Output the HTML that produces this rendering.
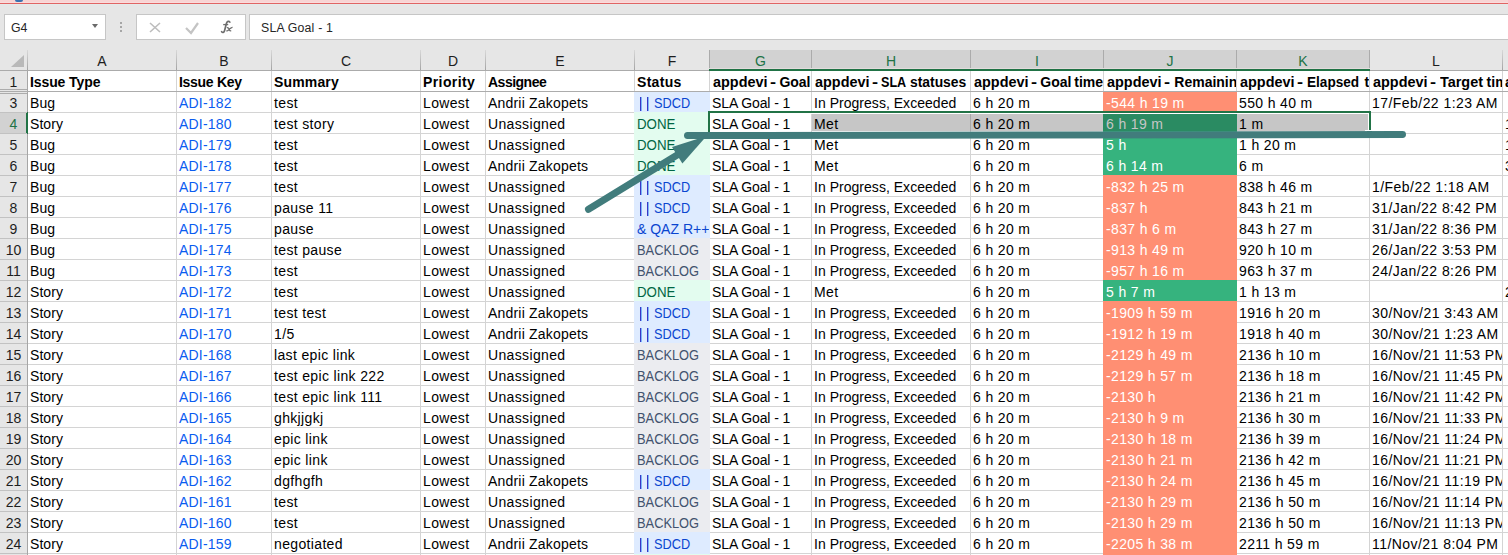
<!DOCTYPE html>
<html><head><meta charset="utf-8"><title>Excel</title>
<style>
html,body{margin:0;padding:0;}
body{width:1508px;height:555px;overflow:hidden;position:relative;background:#e6e6e6;font-family:"Liberation Sans",sans-serif;}
.b{position:absolute;box-sizing:content-box;}
.t,.tb,.hd,.fb{position:absolute;white-space:pre;font-size:14px;line-height:20px;height:20px;}
.tb{font-weight:bold;}
.fb{font-size:12.3px;}
.hd{font-size:14px;}
</style></head><body>
<div class="b" style="left:0px;top:0px;width:1508px;height:3px;background:#f8d4d4;"></div>
<div class="b" style="left:0px;top:2px;width:1508px;height:1px;background:#fadcdc;"></div>
<div class="b" style="left:0px;top:3px;width:1508px;height:1px;background:#e06464;"></div>
<div class="b" style="left:0px;top:4px;width:1508px;height:1px;background:#e4eaea;"></div>
<div class="b" style="left:15px;top:0px;width:8px;height:2px;background:#3a72b0;border-radius:0 0 4px 4px;"></div>
<div class="b" style="left:4px;top:14px;width:100px;height:24px;background:#fff;border:1px solid #c6c6c6;"></div>
<div class="fb" style="left:11px;top:18px;color:#262626;">G4</div>
<div class="b" style="left:92px;top:24px;width:0;height:0;border-left:3.5px solid transparent;border-right:3.5px solid transparent;border-top:4px solid #6a6a6a;"></div>
<div class="b" style="left:120px;top:22px;width:2px;height:2px;background:#a6a6a6;"></div>
<div class="b" style="left:120px;top:26px;width:2px;height:2px;background:#a6a6a6;"></div>
<div class="b" style="left:120px;top:30px;width:2px;height:2px;background:#a6a6a6;"></div>
<div class="b" style="left:136px;top:14px;width:108px;height:24px;background:#fff;border:1px solid #c6c6c6;"></div>
<svg class="b" style="left:136px;top:14px" width="110" height="26"><path d="M14 9 L24 18 M24 9 L14 18" stroke="#bdbdbd" stroke-width="1.6" fill="none"/><path d="M50 14 L55 19 L62 9" stroke="#c4c4c4" stroke-width="2.2" fill="none"/></svg>
<svg class="b" style="left:0;top:0" width="260" height="40"><path d="M229.8 22.2 C229 20.8 227 21 226.4 23.5 L224.6 30.5 C224 32.8 222.5 33 221.6 31.6" stroke="#6e6e6e" stroke-width="1.7" fill="none" stroke-linecap="round"/><path d="M223.2 24.6 L228.2 24.6" stroke="#6e6e6e" stroke-width="1.3" fill="none"/><path d="M226.8 27.6 C228.6 27.2 229.2 29 229.6 30.4 C230 31 231 30.8 231.2 30.6 M232.6 27.4 C231.6 27.2 229 29.5 228 30.4 C227.5 30.9 226.8 30.8 226.4 30.6" stroke="#6e6e6e" stroke-width="1.3" fill="none"/></svg>
<div class="b" style="left:249px;top:14px;width:1280px;height:24px;background:#fff;border:1px solid #c6c6c6;"></div>
<div class="fb" style="left:261px;top:18px;color:#262626;letter-spacing:0.2px;">SLA Goal - 1</div>
<div class="b" style="left:0px;top:50px;width:1508px;height:20px;background:#e6e6e6;"></div>
<div class="b" style="left:0px;top:70px;width:1508px;height:1px;background:#ababab;"></div>
<div class="b" style="left:710px;top:50px;width:660px;height:19px;background:#d2d2d2;"></div>
<div class="b" style="left:11px;top:55px;width:0;height:0;border-bottom:12px solid #b9b9b9;border-left:13px solid transparent;"></div>
<div class="b" style="left:27px;top:50px;width:1px;height:20px;background:linear-gradient(#d8d8d8,#a4a4a4);"></div>
<div class="b" style="left:176px;top:50px;width:1px;height:20px;background:linear-gradient(#d8d8d8,#a4a4a4);"></div>
<div class="b" style="left:271px;top:50px;width:1px;height:20px;background:linear-gradient(#d8d8d8,#a4a4a4);"></div>
<div class="b" style="left:420px;top:50px;width:1px;height:20px;background:linear-gradient(#d8d8d8,#a4a4a4);"></div>
<div class="b" style="left:485px;top:50px;width:1px;height:20px;background:linear-gradient(#d8d8d8,#a4a4a4);"></div>
<div class="b" style="left:634px;top:50px;width:1px;height:20px;background:linear-gradient(#d8d8d8,#a4a4a4);"></div>
<div class="b" style="left:709px;top:50px;width:1px;height:20px;background:#ababab;"></div>
<div class="b" style="left:811px;top:50px;width:1px;height:20px;background:#ababab;"></div>
<div class="b" style="left:970px;top:50px;width:1px;height:20px;background:#ababab;"></div>
<div class="b" style="left:1103px;top:50px;width:1px;height:20px;background:#ababab;"></div>
<div class="b" style="left:1236px;top:50px;width:1px;height:20px;background:#ababab;"></div>
<div class="b" style="left:1369px;top:50px;width:1px;height:20px;background:#ababab;"></div>
<div class="b" style="left:1502px;top:50px;width:1px;height:20px;background:linear-gradient(#d8d8d8,#a4a4a4);"></div>
<div class="b" style="left:709px;top:68px;width:661px;height:1px;background:#e2dcdc;"></div>
<div class="b" style="left:709px;top:69px;width:661px;height:2px;background:#217346;"></div>
<div class="hd" style="left:28px;top:51px;width:148px;text-align:center;color:#1e1e1e">A</div>
<div class="hd" style="left:177px;top:51px;width:94px;text-align:center;color:#1e1e1e">B</div>
<div class="hd" style="left:272px;top:51px;width:148px;text-align:center;color:#1e1e1e">C</div>
<div class="hd" style="left:421px;top:51px;width:64px;text-align:center;color:#1e1e1e">D</div>
<div class="hd" style="left:486px;top:51px;width:148px;text-align:center;color:#1e1e1e">E</div>
<div class="hd" style="left:635px;top:51px;width:74px;text-align:center;color:#1e1e1e">F</div>
<div class="hd" style="left:710px;top:51px;width:101px;text-align:center;color:#217346">G</div>
<div class="hd" style="left:812px;top:51px;width:158px;text-align:center;color:#217346">H</div>
<div class="hd" style="left:971px;top:51px;width:132px;text-align:center;color:#217346">I</div>
<div class="hd" style="left:1104px;top:51px;width:132px;text-align:center;color:#217346">J</div>
<div class="hd" style="left:1237px;top:51px;width:132px;text-align:center;color:#217346">K</div>
<div class="hd" style="left:1370px;top:51px;width:132px;text-align:center;color:#1e1e1e">L</div>
<div class="hd" style="left:1503px;top:51px;width:132px;text-align:center;color:#1e1e1e">M</div>
<div class="b" style="left:0px;top:71px;width:27px;height:484px;background:#e6e6e6;"></div>
<div class="b" style="left:27px;top:71px;width:1px;height:484px;background:#a6a6a6;"></div>
<div class="b" style="left:0px;top:113px;width:26px;height:20px;background:#d2d2d2;"></div>
<div class="b" style="left:26px;top:112px;width:2px;height:22px;background:#217346;"></div>
<div class="b" style="left:28px;top:71px;width:1480px;height:484px;background:#fff;"></div>
<div class="tb" style="left:30px;top:72px;color:#000;width:146px;overflow:hidden;letter-spacing:-0.1px;">Issue Type</div>
<div class="tb" style="left:179px;top:72px;color:#000;width:92px;overflow:hidden;letter-spacing:-0.3px;">Issue Key</div>
<div class="tb" style="left:274px;top:72px;color:#000;width:146px;overflow:hidden;letter-spacing:0.15px;">Summary</div>
<div class="tb" style="left:423px;top:72px;color:#000;width:62px;overflow:hidden;letter-spacing:0.4px;">Priority</div>
<div class="tb" style="left:488px;top:72px;color:#000;width:146px;overflow:hidden;letter-spacing:-0.5px;">Assignee</div>
<div class="tb" style="left:637px;top:72px;color:#000;width:72px;overflow:hidden;letter-spacing:0.3px;">Status</div>
<div class="tb" style="left:710px;top:72px;width:101px;overflow:hidden;"><span style="position:absolute;left:2.6px;top:0;transform:scaleX(1.03);transform-origin:0 0;">appdevi</span><span style="position:absolute;left:60.3px;top:0;transform:scaleX(1.3);transform-origin:0 0;">-</span><span style="position:absolute;left:69.4px;top:0;transform:scaleX(1.0);transform-origin:0 0;">Goal</span></div>
<div class="tb" style="left:812px;top:72px;width:158px;overflow:hidden;"><span style="position:absolute;left:2.7px;top:0;transform:scaleX(1.03);transform-origin:0 0;">appdevi</span><span style="position:absolute;left:60.2px;top:0;transform:scaleX(1.3);transform-origin:0 0;">-</span><span style="position:absolute;left:69.0px;top:0;transform:scaleX(0.9);transform-origin:0 0;">SLA</span><span style="position:absolute;left:98.3px;top:0;transform:scaleX(0.99);transform-origin:0 0;">statuses</span></div>
<div class="tb" style="left:971px;top:72px;width:132px;overflow:hidden;"><span style="position:absolute;left:2.5px;top:0;transform:scaleX(1.03);transform-origin:0 0;">appdevi</span><span style="position:absolute;left:60.0px;top:0;transform:scaleX(1.3);transform-origin:0 0;">-</span><span style="position:absolute;left:69.3px;top:0;transform:scaleX(1.0);transform-origin:0 0;">Goal</span><span style="position:absolute;left:103.3px;top:0;transform:scaleX(1.0);transform-origin:0 0;">time</span></div>
<div class="tb" style="left:1104px;top:72px;width:132px;overflow:hidden;"><span style="position:absolute;left:2.6px;top:0;transform:scaleX(1.03);transform-origin:0 0;">appdevi</span><span style="position:absolute;left:60.1px;top:0;transform:scaleX(1.3);transform-origin:0 0;">-</span><span style="position:absolute;left:70.3px;top:0;transform:scaleX(1.0);transform-origin:0 0;">Remaining</span></div>
<div class="tb" style="left:1237px;top:72px;width:132px;overflow:hidden;"><span style="position:absolute;left:2.6px;top:0;transform:scaleX(1.03);transform-origin:0 0;">appdevi</span><span style="position:absolute;left:60.1px;top:0;transform:scaleX(1.3);transform-origin:0 0;">-</span><span style="position:absolute;left:70.3px;top:0;transform:scaleX(0.97);transform-origin:0 0;">Elapsed</span><span style="position:absolute;left:127.4px;top:0;transform:scaleX(1.0);transform-origin:0 0;">time</span></div>
<div class="tb" style="left:1370px;top:72px;width:132px;overflow:hidden;"><span style="position:absolute;left:2.8px;top:0;transform:scaleX(1.03);transform-origin:0 0;">appdevi</span><span style="position:absolute;left:60.3px;top:0;transform:scaleX(1.3);transform-origin:0 0;">-</span><span style="position:absolute;left:70.0px;top:0;transform:scaleX(1.03);transform-origin:0 0;">Target</span><span style="position:absolute;left:116.6px;top:0;transform:scaleX(1.0);transform-origin:0 0;">time</span></div>
<div class="tb" style="left:1503px;top:72px;width:132px;overflow:hidden;"><span style="position:absolute;left:2.0px;top:0;transform:scaleX(1.03);transform-origin:0 0;">appdevi</span></div>
<div class="b" style="left:0px;top:91px;width:1508px;height:1px;background:#acacac;"></div>
<div class="b" style="left:0px;top:89px;width:27px;height:1px;background:#acacac;"></div>
<div class="b" style="left:0px;top:93px;width:27px;height:1px;background:#acacac;"></div>
<div class="b" style="left:28px;top:112px;width:1480px;height:1px;background:#d4d4d4;"></div>
<div class="b" style="left:28px;top:133px;width:1480px;height:1px;background:#d4d4d4;"></div>
<div class="b" style="left:28px;top:154px;width:1480px;height:1px;background:#d4d4d4;"></div>
<div class="b" style="left:28px;top:175px;width:1480px;height:1px;background:#d4d4d4;"></div>
<div class="b" style="left:28px;top:196px;width:1480px;height:1px;background:#d4d4d4;"></div>
<div class="b" style="left:28px;top:217px;width:1480px;height:1px;background:#d4d4d4;"></div>
<div class="b" style="left:28px;top:238px;width:1480px;height:1px;background:#d4d4d4;"></div>
<div class="b" style="left:28px;top:259px;width:1480px;height:1px;background:#d4d4d4;"></div>
<div class="b" style="left:28px;top:280px;width:1480px;height:1px;background:#d4d4d4;"></div>
<div class="b" style="left:28px;top:301px;width:1480px;height:1px;background:#d4d4d4;"></div>
<div class="b" style="left:28px;top:322px;width:1480px;height:1px;background:#d4d4d4;"></div>
<div class="b" style="left:28px;top:343px;width:1480px;height:1px;background:#d4d4d4;"></div>
<div class="b" style="left:28px;top:364px;width:1480px;height:1px;background:#d4d4d4;"></div>
<div class="b" style="left:28px;top:385px;width:1480px;height:1px;background:#d4d4d4;"></div>
<div class="b" style="left:28px;top:406px;width:1480px;height:1px;background:#d4d4d4;"></div>
<div class="b" style="left:28px;top:427px;width:1480px;height:1px;background:#d4d4d4;"></div>
<div class="b" style="left:28px;top:448px;width:1480px;height:1px;background:#d4d4d4;"></div>
<div class="b" style="left:28px;top:469px;width:1480px;height:1px;background:#d4d4d4;"></div>
<div class="b" style="left:28px;top:490px;width:1480px;height:1px;background:#d4d4d4;"></div>
<div class="b" style="left:28px;top:511px;width:1480px;height:1px;background:#d4d4d4;"></div>
<div class="b" style="left:28px;top:532px;width:1480px;height:1px;background:#d4d4d4;"></div>
<div class="b" style="left:28px;top:553px;width:1480px;height:1px;background:#d4d4d4;"></div>
<div class="b" style="left:176px;top:71px;width:1px;height:484px;background:#d4d4d4;"></div>
<div class="b" style="left:271px;top:71px;width:1px;height:484px;background:#d4d4d4;"></div>
<div class="b" style="left:420px;top:71px;width:1px;height:484px;background:#d4d4d4;"></div>
<div class="b" style="left:485px;top:71px;width:1px;height:484px;background:#d4d4d4;"></div>
<div class="b" style="left:634px;top:71px;width:1px;height:484px;background:#d4d4d4;"></div>
<div class="b" style="left:709px;top:71px;width:1px;height:484px;background:#d4d4d4;"></div>
<div class="b" style="left:811px;top:71px;width:1px;height:484px;background:#d4d4d4;"></div>
<div class="b" style="left:970px;top:71px;width:1px;height:484px;background:#d4d4d4;"></div>
<div class="b" style="left:1103px;top:71px;width:1px;height:484px;background:#d4d4d4;"></div>
<div class="b" style="left:1236px;top:71px;width:1px;height:484px;background:#d4d4d4;"></div>
<div class="b" style="left:1369px;top:71px;width:1px;height:484px;background:#d4d4d4;"></div>
<div class="b" style="left:1502px;top:71px;width:1px;height:484px;background:#d4d4d4;"></div>
<div class="b" style="left:0px;top:112px;width:27px;height:1px;background:#c2c2c2;"></div>
<div class="b" style="left:0px;top:133px;width:27px;height:1px;background:#c2c2c2;"></div>
<div class="b" style="left:0px;top:154px;width:27px;height:1px;background:#c2c2c2;"></div>
<div class="b" style="left:0px;top:175px;width:27px;height:1px;background:#c2c2c2;"></div>
<div class="b" style="left:0px;top:196px;width:27px;height:1px;background:#c2c2c2;"></div>
<div class="b" style="left:0px;top:217px;width:27px;height:1px;background:#c2c2c2;"></div>
<div class="b" style="left:0px;top:238px;width:27px;height:1px;background:#c2c2c2;"></div>
<div class="b" style="left:0px;top:259px;width:27px;height:1px;background:#c2c2c2;"></div>
<div class="b" style="left:0px;top:280px;width:27px;height:1px;background:#c2c2c2;"></div>
<div class="b" style="left:0px;top:301px;width:27px;height:1px;background:#c2c2c2;"></div>
<div class="b" style="left:0px;top:322px;width:27px;height:1px;background:#c2c2c2;"></div>
<div class="b" style="left:0px;top:343px;width:27px;height:1px;background:#c2c2c2;"></div>
<div class="b" style="left:0px;top:364px;width:27px;height:1px;background:#c2c2c2;"></div>
<div class="b" style="left:0px;top:385px;width:27px;height:1px;background:#c2c2c2;"></div>
<div class="b" style="left:0px;top:406px;width:27px;height:1px;background:#c2c2c2;"></div>
<div class="b" style="left:0px;top:427px;width:27px;height:1px;background:#c2c2c2;"></div>
<div class="b" style="left:0px;top:448px;width:27px;height:1px;background:#c2c2c2;"></div>
<div class="b" style="left:0px;top:469px;width:27px;height:1px;background:#c2c2c2;"></div>
<div class="b" style="left:0px;top:490px;width:27px;height:1px;background:#c2c2c2;"></div>
<div class="b" style="left:0px;top:511px;width:27px;height:1px;background:#c2c2c2;"></div>
<div class="b" style="left:0px;top:532px;width:27px;height:1px;background:#c2c2c2;"></div>
<div class="b" style="left:0px;top:553px;width:27px;height:1px;background:#c2c2c2;"></div>
<div class="b" style="left:634px;top:91px;width:76px;height:22px;background:#deebff;"></div>
<div class="b" style="left:1103px;top:91px;width:134px;height:22px;background:#ff8f73;"></div>
<div class="b" style="left:634px;top:112px;width:76px;height:22px;background:#e3fcef;"></div>
<div class="b" style="left:1103px;top:112px;width:134px;height:22px;background:#36b37e;"></div>
<div class="b" style="left:634px;top:133px;width:76px;height:22px;background:#e3fcef;"></div>
<div class="b" style="left:1103px;top:133px;width:134px;height:22px;background:#36b37e;"></div>
<div class="b" style="left:634px;top:154px;width:76px;height:22px;background:#e3fcef;"></div>
<div class="b" style="left:1103px;top:154px;width:134px;height:22px;background:#36b37e;"></div>
<div class="b" style="left:634px;top:175px;width:76px;height:22px;background:#deebff;"></div>
<div class="b" style="left:1103px;top:175px;width:134px;height:22px;background:#ff8f73;"></div>
<div class="b" style="left:634px;top:196px;width:76px;height:22px;background:#deebff;"></div>
<div class="b" style="left:1103px;top:196px;width:134px;height:22px;background:#ff8f73;"></div>
<div class="b" style="left:634px;top:217px;width:76px;height:22px;background:#deebff;"></div>
<div class="b" style="left:1103px;top:217px;width:134px;height:22px;background:#ff8f73;"></div>
<div class="b" style="left:634px;top:238px;width:76px;height:22px;background:#ebecf0;"></div>
<div class="b" style="left:1103px;top:238px;width:134px;height:22px;background:#ff8f73;"></div>
<div class="b" style="left:634px;top:259px;width:76px;height:22px;background:#ebecf0;"></div>
<div class="b" style="left:1103px;top:259px;width:134px;height:22px;background:#ff8f73;"></div>
<div class="b" style="left:634px;top:280px;width:76px;height:22px;background:#e3fcef;"></div>
<div class="b" style="left:1103px;top:280px;width:134px;height:22px;background:#36b37e;"></div>
<div class="b" style="left:634px;top:301px;width:76px;height:22px;background:#deebff;"></div>
<div class="b" style="left:1103px;top:301px;width:134px;height:22px;background:#ff8f73;"></div>
<div class="b" style="left:634px;top:322px;width:76px;height:22px;background:#deebff;"></div>
<div class="b" style="left:1103px;top:322px;width:134px;height:22px;background:#ff8f73;"></div>
<div class="b" style="left:634px;top:343px;width:76px;height:22px;background:#ebecf0;"></div>
<div class="b" style="left:1103px;top:343px;width:134px;height:22px;background:#ff8f73;"></div>
<div class="b" style="left:634px;top:364px;width:76px;height:22px;background:#ebecf0;"></div>
<div class="b" style="left:1103px;top:364px;width:134px;height:22px;background:#ff8f73;"></div>
<div class="b" style="left:634px;top:385px;width:76px;height:22px;background:#ebecf0;"></div>
<div class="b" style="left:1103px;top:385px;width:134px;height:22px;background:#ff8f73;"></div>
<div class="b" style="left:634px;top:406px;width:76px;height:22px;background:#ebecf0;"></div>
<div class="b" style="left:1103px;top:406px;width:134px;height:22px;background:#ff8f73;"></div>
<div class="b" style="left:634px;top:427px;width:76px;height:22px;background:#ebecf0;"></div>
<div class="b" style="left:1103px;top:427px;width:134px;height:22px;background:#ff8f73;"></div>
<div class="b" style="left:634px;top:448px;width:76px;height:22px;background:#ebecf0;"></div>
<div class="b" style="left:1103px;top:448px;width:134px;height:22px;background:#ff8f73;"></div>
<div class="b" style="left:634px;top:469px;width:76px;height:22px;background:#deebff;"></div>
<div class="b" style="left:1103px;top:469px;width:134px;height:22px;background:#ff8f73;"></div>
<div class="b" style="left:634px;top:490px;width:76px;height:22px;background:#ebecf0;"></div>
<div class="b" style="left:1103px;top:490px;width:134px;height:22px;background:#ff8f73;"></div>
<div class="b" style="left:634px;top:511px;width:76px;height:22px;background:#ebecf0;"></div>
<div class="b" style="left:1103px;top:511px;width:134px;height:22px;background:#ff8f73;"></div>
<div class="b" style="left:634px;top:532px;width:76px;height:24px;background:#deebff;"></div>
<div class="b" style="left:1103px;top:532px;width:134px;height:24px;background:#ff8f73;"></div>
<div class="b" style="left:634px;top:554px;width:76px;height:1px;background:#e3fcef;"></div>
<div class="b" style="left:0px;top:91px;width:1508px;height:1px;background:#acacac;"></div>
<div class="b" style="left:812px;top:113px;width:291px;height:18px;background:#c6c6c6;"></div>
<div class="b" style="left:970px;top:113px;width:1px;height:18px;background:#a8a8a8;"></div>
<div class="b" style="left:1103px;top:113px;width:134px;height:18px;background:#2a8b62;"></div>
<div class="b" style="left:1237px;top:113px;width:131px;height:18px;background:#c6c6c6;"></div>
<div class="t" style="left:0px;top:93px;width:27px;text-align:center;color:#1e1e1e">3</div>
<div class="t" style="left:30px;top:93px;color:#000;letter-spacing:0.1px;">Bug</div>
<div class="t" style="left:179px;top:93px;color:#0a5cf0;letter-spacing:0.2px;">ADI-182</div>
<div class="t" style="left:274px;top:93px;color:#000;letter-spacing:0.35px;">test</div>
<div class="t" style="left:423px;top:93px;color:#000;letter-spacing:0.35px;">Lowest</div>
<div class="t" style="left:488px;top:93px;color:#000;letter-spacing:0.2px;">Andrii Zakopets</div>
<div class="b" style="left:640px;top:97px;width:1px;height:14px;background:#3b36c4;box-shadow:1px 0 0 rgba(40,140,240,0.55)"></div>
<div class="b" style="left:647px;top:97px;width:1px;height:14px;background:#3b36c4;box-shadow:1px 0 0 rgba(40,140,240,0.55)"></div>
<div class="t" style="left:654px;top:93px;color:#0a45d0;transform:scaleX(0.91);transform-origin:0 0;">SDCD</div>
<div class="t" style="left:712px;top:93px;color:#000;letter-spacing:-0.1px;">SLA Goal - 1</div>
<div class="t" style="left:814px;top:93px;color:#000;letter-spacing:0.03px;">In Progress, Exceeded</div>
<div class="t" style="left:973px;top:93px;color:#000;letter-spacing:0.35px;">6 h 20 m</div>
<div class="t" style="left:1106px;top:93px;color:#fff;letter-spacing:0.35px;">-544 h 19 m</div>
<div class="t" style="left:1239px;top:93px;color:#000;letter-spacing:0.35px;">550 h 40 m</div>
<div class="t" style="left:1372px;top:93px;color:#000;width:130px;overflow:hidden;letter-spacing:0.45px;">17/Feb/22 1:23 AM</div>
<div class="t" style="left:0px;top:114px;width:27px;text-align:center;color:#217346">4</div>
<div class="t" style="left:30px;top:114px;color:#000;letter-spacing:0.05px;">Story</div>
<div class="t" style="left:179px;top:114px;color:#0a5cf0;letter-spacing:0.2px;">ADI-180</div>
<div class="t" style="left:274px;top:114px;color:#000;letter-spacing:0.35px;">test story</div>
<div class="t" style="left:423px;top:114px;color:#000;letter-spacing:0.35px;">Lowest</div>
<div class="t" style="left:488px;top:114px;color:#000;letter-spacing:0.35px;">Unassigned</div>
<div class="t" style="left:637px;top:114px;color:#006644;transform:scaleX(0.95);transform-origin:0 0;">DONE</div>
<div class="t" style="left:712px;top:114px;color:#000;letter-spacing:-0.1px;">SLA Goal - 1</div>
<div class="t" style="left:814px;top:114px;color:#000;letter-spacing:0.35px;">Met</div>
<div class="t" style="left:973px;top:114px;color:#000;letter-spacing:0.35px;">6 h 20 m</div>
<div class="t" style="left:1106px;top:114px;color:#c6c6c6;letter-spacing:0.35px;">6 h 19 m</div>
<div class="t" style="left:1239px;top:114px;color:#000;letter-spacing:0.35px;">1 m</div>
<div class="t" style="left:1505px;top:114px;color:#000;letter-spacing:0.35px;">1</div>
<div class="t" style="left:0px;top:135px;width:27px;text-align:center;color:#1e1e1e">5</div>
<div class="t" style="left:30px;top:135px;color:#000;letter-spacing:0.1px;">Bug</div>
<div class="t" style="left:179px;top:135px;color:#0a5cf0;letter-spacing:0.2px;">ADI-179</div>
<div class="t" style="left:274px;top:135px;color:#000;letter-spacing:0.35px;">test</div>
<div class="t" style="left:423px;top:135px;color:#000;letter-spacing:0.35px;">Lowest</div>
<div class="t" style="left:488px;top:135px;color:#000;letter-spacing:0.35px;">Unassigned</div>
<div class="t" style="left:637px;top:135px;color:#006644;transform:scaleX(0.95);transform-origin:0 0;">DONE</div>
<div class="t" style="left:712px;top:135px;color:#000;letter-spacing:-0.1px;">SLA Goal - 1</div>
<div class="t" style="left:814px;top:135px;color:#000;letter-spacing:0.35px;">Met</div>
<div class="t" style="left:973px;top:135px;color:#000;letter-spacing:0.35px;">6 h 20 m</div>
<div class="t" style="left:1106px;top:135px;color:#fff;letter-spacing:0.35px;">5 h</div>
<div class="t" style="left:1239px;top:135px;color:#000;letter-spacing:0.35px;">1 h 20 m</div>
<div class="t" style="left:1505px;top:135px;color:#000;letter-spacing:0.35px;">1</div>
<div class="t" style="left:0px;top:156px;width:27px;text-align:center;color:#1e1e1e">6</div>
<div class="t" style="left:30px;top:156px;color:#000;letter-spacing:0.1px;">Bug</div>
<div class="t" style="left:179px;top:156px;color:#0a5cf0;letter-spacing:0.2px;">ADI-178</div>
<div class="t" style="left:274px;top:156px;color:#000;letter-spacing:0.35px;">test</div>
<div class="t" style="left:423px;top:156px;color:#000;letter-spacing:0.35px;">Lowest</div>
<div class="t" style="left:488px;top:156px;color:#000;letter-spacing:0.2px;">Andrii Zakopets</div>
<div class="t" style="left:637px;top:156px;color:#006644;transform:scaleX(0.95);transform-origin:0 0;">DONE</div>
<div class="t" style="left:712px;top:156px;color:#000;letter-spacing:-0.1px;">SLA Goal - 1</div>
<div class="t" style="left:814px;top:156px;color:#000;letter-spacing:0.35px;">Met</div>
<div class="t" style="left:973px;top:156px;color:#000;letter-spacing:0.35px;">6 h 20 m</div>
<div class="t" style="left:1106px;top:156px;color:#fff;letter-spacing:0.35px;">6 h 14 m</div>
<div class="t" style="left:1239px;top:156px;color:#000;letter-spacing:0.35px;">6 m</div>
<div class="t" style="left:1505px;top:156px;color:#000;letter-spacing:0.35px;">3</div>
<div class="t" style="left:0px;top:177px;width:27px;text-align:center;color:#1e1e1e">7</div>
<div class="t" style="left:30px;top:177px;color:#000;letter-spacing:0.1px;">Bug</div>
<div class="t" style="left:179px;top:177px;color:#0a5cf0;letter-spacing:0.2px;">ADI-177</div>
<div class="t" style="left:274px;top:177px;color:#000;letter-spacing:0.35px;">test</div>
<div class="t" style="left:423px;top:177px;color:#000;letter-spacing:0.35px;">Lowest</div>
<div class="t" style="left:488px;top:177px;color:#000;letter-spacing:0.35px;">Unassigned</div>
<div class="b" style="left:640px;top:181px;width:1px;height:14px;background:#3b36c4;box-shadow:1px 0 0 rgba(40,140,240,0.55)"></div>
<div class="b" style="left:647px;top:181px;width:1px;height:14px;background:#3b36c4;box-shadow:1px 0 0 rgba(40,140,240,0.55)"></div>
<div class="t" style="left:654px;top:177px;color:#0a45d0;transform:scaleX(0.91);transform-origin:0 0;">SDCD</div>
<div class="t" style="left:712px;top:177px;color:#000;letter-spacing:-0.1px;">SLA Goal - 1</div>
<div class="t" style="left:814px;top:177px;color:#000;letter-spacing:0.03px;">In Progress, Exceeded</div>
<div class="t" style="left:973px;top:177px;color:#000;letter-spacing:0.35px;">6 h 20 m</div>
<div class="t" style="left:1106px;top:177px;color:#fff;letter-spacing:0.35px;">-832 h 25 m</div>
<div class="t" style="left:1239px;top:177px;color:#000;letter-spacing:0.35px;">838 h 46 m</div>
<div class="t" style="left:1372px;top:177px;color:#000;width:130px;overflow:hidden;letter-spacing:0.45px;">1/Feb/22 1:18 AM</div>
<div class="t" style="left:0px;top:198px;width:27px;text-align:center;color:#1e1e1e">8</div>
<div class="t" style="left:30px;top:198px;color:#000;letter-spacing:0.1px;">Bug</div>
<div class="t" style="left:179px;top:198px;color:#0a5cf0;letter-spacing:0.2px;">ADI-176</div>
<div class="t" style="left:274px;top:198px;color:#000;letter-spacing:0.35px;">pause 11</div>
<div class="t" style="left:423px;top:198px;color:#000;letter-spacing:0.35px;">Lowest</div>
<div class="t" style="left:488px;top:198px;color:#000;letter-spacing:0.35px;">Unassigned</div>
<div class="b" style="left:640px;top:202px;width:1px;height:14px;background:#3b36c4;box-shadow:1px 0 0 rgba(40,140,240,0.55)"></div>
<div class="b" style="left:647px;top:202px;width:1px;height:14px;background:#3b36c4;box-shadow:1px 0 0 rgba(40,140,240,0.55)"></div>
<div class="t" style="left:654px;top:198px;color:#0a45d0;transform:scaleX(0.91);transform-origin:0 0;">SDCD</div>
<div class="t" style="left:712px;top:198px;color:#000;letter-spacing:-0.1px;">SLA Goal - 1</div>
<div class="t" style="left:814px;top:198px;color:#000;letter-spacing:0.03px;">In Progress, Exceeded</div>
<div class="t" style="left:973px;top:198px;color:#000;letter-spacing:0.35px;">6 h 20 m</div>
<div class="t" style="left:1106px;top:198px;color:#fff;letter-spacing:0.35px;">-837 h</div>
<div class="t" style="left:1239px;top:198px;color:#000;letter-spacing:0.35px;">843 h 21 m</div>
<div class="t" style="left:1372px;top:198px;color:#000;width:130px;overflow:hidden;letter-spacing:0.45px;">31/Jan/22 8:42 PM</div>
<div class="t" style="left:0px;top:219px;width:27px;text-align:center;color:#1e1e1e">9</div>
<div class="t" style="left:30px;top:219px;color:#000;letter-spacing:0.1px;">Bug</div>
<div class="t" style="left:179px;top:219px;color:#0a5cf0;letter-spacing:0.2px;">ADI-175</div>
<div class="t" style="left:274px;top:219px;color:#000;letter-spacing:0.35px;">pause</div>
<div class="t" style="left:423px;top:219px;color:#000;letter-spacing:0.35px;">Lowest</div>
<div class="t" style="left:488px;top:219px;color:#000;letter-spacing:0.35px;">Unassigned</div>
<div class="t" style="left:637px;top:219px;color:#0a45d0;width:72px;overflow:hidden;">&amp; QAZ R++</div>
<div class="t" style="left:712px;top:219px;color:#000;letter-spacing:-0.1px;">SLA Goal - 1</div>
<div class="t" style="left:814px;top:219px;color:#000;letter-spacing:0.03px;">In Progress, Exceeded</div>
<div class="t" style="left:973px;top:219px;color:#000;letter-spacing:0.35px;">6 h 20 m</div>
<div class="t" style="left:1106px;top:219px;color:#fff;letter-spacing:0.35px;">-837 h 6 m</div>
<div class="t" style="left:1239px;top:219px;color:#000;letter-spacing:0.35px;">843 h 27 m</div>
<div class="t" style="left:1372px;top:219px;color:#000;width:130px;overflow:hidden;letter-spacing:0.45px;">31/Jan/22 8:36 PM</div>
<div class="t" style="left:0px;top:240px;width:27px;text-align:center;color:#1e1e1e">10</div>
<div class="t" style="left:30px;top:240px;color:#000;letter-spacing:0.1px;">Bug</div>
<div class="t" style="left:179px;top:240px;color:#0a5cf0;letter-spacing:0.2px;">ADI-174</div>
<div class="t" style="left:274px;top:240px;color:#000;letter-spacing:0.35px;">test pause</div>
<div class="t" style="left:423px;top:240px;color:#000;letter-spacing:0.35px;">Lowest</div>
<div class="t" style="left:488px;top:240px;color:#000;letter-spacing:0.35px;">Unassigned</div>
<div class="t" style="left:637px;top:240px;color:#42526e;transform:scaleX(0.917);transform-origin:0 0;">BACKLOG</div>
<div class="t" style="left:712px;top:240px;color:#000;letter-spacing:-0.1px;">SLA Goal - 1</div>
<div class="t" style="left:814px;top:240px;color:#000;letter-spacing:0.03px;">In Progress, Exceeded</div>
<div class="t" style="left:973px;top:240px;color:#000;letter-spacing:0.35px;">6 h 20 m</div>
<div class="t" style="left:1106px;top:240px;color:#fff;letter-spacing:0.35px;">-913 h 49 m</div>
<div class="t" style="left:1239px;top:240px;color:#000;letter-spacing:0.35px;">920 h 10 m</div>
<div class="t" style="left:1372px;top:240px;color:#000;width:130px;overflow:hidden;letter-spacing:0.45px;">26/Jan/22 3:53 PM</div>
<div class="t" style="left:0px;top:261px;width:27px;text-align:center;color:#1e1e1e">11</div>
<div class="t" style="left:30px;top:261px;color:#000;letter-spacing:0.1px;">Bug</div>
<div class="t" style="left:179px;top:261px;color:#0a5cf0;letter-spacing:0.2px;">ADI-173</div>
<div class="t" style="left:274px;top:261px;color:#000;letter-spacing:0.35px;">test</div>
<div class="t" style="left:423px;top:261px;color:#000;letter-spacing:0.35px;">Lowest</div>
<div class="t" style="left:488px;top:261px;color:#000;letter-spacing:0.35px;">Unassigned</div>
<div class="t" style="left:637px;top:261px;color:#42526e;transform:scaleX(0.917);transform-origin:0 0;">BACKLOG</div>
<div class="t" style="left:712px;top:261px;color:#000;letter-spacing:-0.1px;">SLA Goal - 1</div>
<div class="t" style="left:814px;top:261px;color:#000;letter-spacing:0.03px;">In Progress, Exceeded</div>
<div class="t" style="left:973px;top:261px;color:#000;letter-spacing:0.35px;">6 h 20 m</div>
<div class="t" style="left:1106px;top:261px;color:#fff;letter-spacing:0.35px;">-957 h 16 m</div>
<div class="t" style="left:1239px;top:261px;color:#000;letter-spacing:0.35px;">963 h 37 m</div>
<div class="t" style="left:1372px;top:261px;color:#000;width:130px;overflow:hidden;letter-spacing:0.45px;">24/Jan/22 8:26 PM</div>
<div class="t" style="left:0px;top:282px;width:27px;text-align:center;color:#1e1e1e">12</div>
<div class="t" style="left:30px;top:282px;color:#000;letter-spacing:0.05px;">Story</div>
<div class="t" style="left:179px;top:282px;color:#0a5cf0;letter-spacing:0.2px;">ADI-172</div>
<div class="t" style="left:274px;top:282px;color:#000;letter-spacing:0.35px;">test</div>
<div class="t" style="left:423px;top:282px;color:#000;letter-spacing:0.35px;">Lowest</div>
<div class="t" style="left:488px;top:282px;color:#000;letter-spacing:0.35px;">Unassigned</div>
<div class="t" style="left:637px;top:282px;color:#006644;transform:scaleX(0.95);transform-origin:0 0;">DONE</div>
<div class="t" style="left:712px;top:282px;color:#000;letter-spacing:-0.1px;">SLA Goal - 1</div>
<div class="t" style="left:814px;top:282px;color:#000;letter-spacing:0.35px;">Met</div>
<div class="t" style="left:973px;top:282px;color:#000;letter-spacing:0.35px;">6 h 20 m</div>
<div class="t" style="left:1106px;top:282px;color:#fff;letter-spacing:0.35px;">5 h 7 m</div>
<div class="t" style="left:1239px;top:282px;color:#000;letter-spacing:0.35px;">1 h 13 m</div>
<div class="t" style="left:1505px;top:282px;color:#000;letter-spacing:0.35px;">2</div>
<div class="t" style="left:0px;top:303px;width:27px;text-align:center;color:#1e1e1e">13</div>
<div class="t" style="left:30px;top:303px;color:#000;letter-spacing:0.05px;">Story</div>
<div class="t" style="left:179px;top:303px;color:#0a5cf0;letter-spacing:0.2px;">ADI-171</div>
<div class="t" style="left:274px;top:303px;color:#000;letter-spacing:0.35px;">test test</div>
<div class="t" style="left:423px;top:303px;color:#000;letter-spacing:0.35px;">Lowest</div>
<div class="t" style="left:488px;top:303px;color:#000;letter-spacing:0.2px;">Andrii Zakopets</div>
<div class="b" style="left:640px;top:307px;width:1px;height:14px;background:#3b36c4;box-shadow:1px 0 0 rgba(40,140,240,0.55)"></div>
<div class="b" style="left:647px;top:307px;width:1px;height:14px;background:#3b36c4;box-shadow:1px 0 0 rgba(40,140,240,0.55)"></div>
<div class="t" style="left:654px;top:303px;color:#0a45d0;transform:scaleX(0.91);transform-origin:0 0;">SDCD</div>
<div class="t" style="left:712px;top:303px;color:#000;letter-spacing:-0.1px;">SLA Goal - 1</div>
<div class="t" style="left:814px;top:303px;color:#000;letter-spacing:0.03px;">In Progress, Exceeded</div>
<div class="t" style="left:973px;top:303px;color:#000;letter-spacing:0.35px;">6 h 20 m</div>
<div class="t" style="left:1106px;top:303px;color:#fff;letter-spacing:0.35px;">-1909 h 59 m</div>
<div class="t" style="left:1239px;top:303px;color:#000;letter-spacing:0.35px;">1916 h 20 m</div>
<div class="t" style="left:1372px;top:303px;color:#000;width:130px;overflow:hidden;letter-spacing:0.45px;">30/Nov/21 3:43 AM</div>
<div class="t" style="left:0px;top:324px;width:27px;text-align:center;color:#1e1e1e">14</div>
<div class="t" style="left:30px;top:324px;color:#000;letter-spacing:0.05px;">Story</div>
<div class="t" style="left:179px;top:324px;color:#0a5cf0;letter-spacing:0.2px;">ADI-170</div>
<div class="t" style="left:274px;top:324px;color:#000;letter-spacing:0.35px;">1/5</div>
<div class="t" style="left:423px;top:324px;color:#000;letter-spacing:0.35px;">Lowest</div>
<div class="t" style="left:488px;top:324px;color:#000;letter-spacing:0.2px;">Andrii Zakopets</div>
<div class="b" style="left:640px;top:328px;width:1px;height:14px;background:#3b36c4;box-shadow:1px 0 0 rgba(40,140,240,0.55)"></div>
<div class="b" style="left:647px;top:328px;width:1px;height:14px;background:#3b36c4;box-shadow:1px 0 0 rgba(40,140,240,0.55)"></div>
<div class="t" style="left:654px;top:324px;color:#0a45d0;transform:scaleX(0.91);transform-origin:0 0;">SDCD</div>
<div class="t" style="left:712px;top:324px;color:#000;letter-spacing:-0.1px;">SLA Goal - 1</div>
<div class="t" style="left:814px;top:324px;color:#000;letter-spacing:0.03px;">In Progress, Exceeded</div>
<div class="t" style="left:973px;top:324px;color:#000;letter-spacing:0.35px;">6 h 20 m</div>
<div class="t" style="left:1106px;top:324px;color:#fff;letter-spacing:0.35px;">-1912 h 19 m</div>
<div class="t" style="left:1239px;top:324px;color:#000;letter-spacing:0.35px;">1918 h 40 m</div>
<div class="t" style="left:1372px;top:324px;color:#000;width:130px;overflow:hidden;letter-spacing:0.45px;">30/Nov/21 1:23 AM</div>
<div class="t" style="left:0px;top:345px;width:27px;text-align:center;color:#1e1e1e">15</div>
<div class="t" style="left:30px;top:345px;color:#000;letter-spacing:0.05px;">Story</div>
<div class="t" style="left:179px;top:345px;color:#0a5cf0;letter-spacing:0.2px;">ADI-168</div>
<div class="t" style="left:274px;top:345px;color:#000;letter-spacing:0.35px;">last epic link</div>
<div class="t" style="left:423px;top:345px;color:#000;letter-spacing:0.35px;">Lowest</div>
<div class="t" style="left:488px;top:345px;color:#000;letter-spacing:0.35px;">Unassigned</div>
<div class="t" style="left:637px;top:345px;color:#42526e;transform:scaleX(0.917);transform-origin:0 0;">BACKLOG</div>
<div class="t" style="left:712px;top:345px;color:#000;letter-spacing:-0.1px;">SLA Goal - 1</div>
<div class="t" style="left:814px;top:345px;color:#000;letter-spacing:0.03px;">In Progress, Exceeded</div>
<div class="t" style="left:973px;top:345px;color:#000;letter-spacing:0.35px;">6 h 20 m</div>
<div class="t" style="left:1106px;top:345px;color:#fff;letter-spacing:0.35px;">-2129 h 49 m</div>
<div class="t" style="left:1239px;top:345px;color:#000;letter-spacing:0.35px;">2136 h 10 m</div>
<div class="t" style="left:1372px;top:345px;color:#000;width:130px;overflow:hidden;letter-spacing:0.45px;">16/Nov/21 11:53 PM</div>
<div class="t" style="left:0px;top:366px;width:27px;text-align:center;color:#1e1e1e">16</div>
<div class="t" style="left:30px;top:366px;color:#000;letter-spacing:0.05px;">Story</div>
<div class="t" style="left:179px;top:366px;color:#0a5cf0;letter-spacing:0.2px;">ADI-167</div>
<div class="t" style="left:274px;top:366px;color:#000;letter-spacing:0.35px;">test epic link 222</div>
<div class="t" style="left:423px;top:366px;color:#000;letter-spacing:0.35px;">Lowest</div>
<div class="t" style="left:488px;top:366px;color:#000;letter-spacing:0.35px;">Unassigned</div>
<div class="t" style="left:637px;top:366px;color:#42526e;transform:scaleX(0.917);transform-origin:0 0;">BACKLOG</div>
<div class="t" style="left:712px;top:366px;color:#000;letter-spacing:-0.1px;">SLA Goal - 1</div>
<div class="t" style="left:814px;top:366px;color:#000;letter-spacing:0.03px;">In Progress, Exceeded</div>
<div class="t" style="left:973px;top:366px;color:#000;letter-spacing:0.35px;">6 h 20 m</div>
<div class="t" style="left:1106px;top:366px;color:#fff;letter-spacing:0.35px;">-2129 h 57 m</div>
<div class="t" style="left:1239px;top:366px;color:#000;letter-spacing:0.35px;">2136 h 18 m</div>
<div class="t" style="left:1372px;top:366px;color:#000;width:130px;overflow:hidden;letter-spacing:0.45px;">16/Nov/21 11:45 PM</div>
<div class="t" style="left:0px;top:387px;width:27px;text-align:center;color:#1e1e1e">17</div>
<div class="t" style="left:30px;top:387px;color:#000;letter-spacing:0.05px;">Story</div>
<div class="t" style="left:179px;top:387px;color:#0a5cf0;letter-spacing:0.2px;">ADI-166</div>
<div class="t" style="left:274px;top:387px;color:#000;letter-spacing:0.35px;">test epic link 111</div>
<div class="t" style="left:423px;top:387px;color:#000;letter-spacing:0.35px;">Lowest</div>
<div class="t" style="left:488px;top:387px;color:#000;letter-spacing:0.35px;">Unassigned</div>
<div class="t" style="left:637px;top:387px;color:#42526e;transform:scaleX(0.917);transform-origin:0 0;">BACKLOG</div>
<div class="t" style="left:712px;top:387px;color:#000;letter-spacing:-0.1px;">SLA Goal - 1</div>
<div class="t" style="left:814px;top:387px;color:#000;letter-spacing:0.03px;">In Progress, Exceeded</div>
<div class="t" style="left:973px;top:387px;color:#000;letter-spacing:0.35px;">6 h 20 m</div>
<div class="t" style="left:1106px;top:387px;color:#fff;letter-spacing:0.35px;">-2130 h</div>
<div class="t" style="left:1239px;top:387px;color:#000;letter-spacing:0.35px;">2136 h 21 m</div>
<div class="t" style="left:1372px;top:387px;color:#000;width:130px;overflow:hidden;letter-spacing:0.45px;">16/Nov/21 11:42 PM</div>
<div class="t" style="left:0px;top:408px;width:27px;text-align:center;color:#1e1e1e">18</div>
<div class="t" style="left:30px;top:408px;color:#000;letter-spacing:0.05px;">Story</div>
<div class="t" style="left:179px;top:408px;color:#0a5cf0;letter-spacing:0.2px;">ADI-165</div>
<div class="t" style="left:274px;top:408px;color:#000;letter-spacing:0.35px;">ghkjjgkj</div>
<div class="t" style="left:423px;top:408px;color:#000;letter-spacing:0.35px;">Lowest</div>
<div class="t" style="left:488px;top:408px;color:#000;letter-spacing:0.35px;">Unassigned</div>
<div class="t" style="left:637px;top:408px;color:#42526e;transform:scaleX(0.917);transform-origin:0 0;">BACKLOG</div>
<div class="t" style="left:712px;top:408px;color:#000;letter-spacing:-0.1px;">SLA Goal - 1</div>
<div class="t" style="left:814px;top:408px;color:#000;letter-spacing:0.03px;">In Progress, Exceeded</div>
<div class="t" style="left:973px;top:408px;color:#000;letter-spacing:0.35px;">6 h 20 m</div>
<div class="t" style="left:1106px;top:408px;color:#fff;letter-spacing:0.35px;">-2130 h 9 m</div>
<div class="t" style="left:1239px;top:408px;color:#000;letter-spacing:0.35px;">2136 h 30 m</div>
<div class="t" style="left:1372px;top:408px;color:#000;width:130px;overflow:hidden;letter-spacing:0.45px;">16/Nov/21 11:33 PM</div>
<div class="t" style="left:0px;top:429px;width:27px;text-align:center;color:#1e1e1e">19</div>
<div class="t" style="left:30px;top:429px;color:#000;letter-spacing:0.05px;">Story</div>
<div class="t" style="left:179px;top:429px;color:#0a5cf0;letter-spacing:0.2px;">ADI-164</div>
<div class="t" style="left:274px;top:429px;color:#000;letter-spacing:0.35px;">epic link</div>
<div class="t" style="left:423px;top:429px;color:#000;letter-spacing:0.35px;">Lowest</div>
<div class="t" style="left:488px;top:429px;color:#000;letter-spacing:0.35px;">Unassigned</div>
<div class="t" style="left:637px;top:429px;color:#42526e;transform:scaleX(0.917);transform-origin:0 0;">BACKLOG</div>
<div class="t" style="left:712px;top:429px;color:#000;letter-spacing:-0.1px;">SLA Goal - 1</div>
<div class="t" style="left:814px;top:429px;color:#000;letter-spacing:0.03px;">In Progress, Exceeded</div>
<div class="t" style="left:973px;top:429px;color:#000;letter-spacing:0.35px;">6 h 20 m</div>
<div class="t" style="left:1106px;top:429px;color:#fff;letter-spacing:0.35px;">-2130 h 18 m</div>
<div class="t" style="left:1239px;top:429px;color:#000;letter-spacing:0.35px;">2136 h 39 m</div>
<div class="t" style="left:1372px;top:429px;color:#000;width:130px;overflow:hidden;letter-spacing:0.45px;">16/Nov/21 11:24 PM</div>
<div class="t" style="left:0px;top:450px;width:27px;text-align:center;color:#1e1e1e">20</div>
<div class="t" style="left:30px;top:450px;color:#000;letter-spacing:0.05px;">Story</div>
<div class="t" style="left:179px;top:450px;color:#0a5cf0;letter-spacing:0.2px;">ADI-163</div>
<div class="t" style="left:274px;top:450px;color:#000;letter-spacing:0.35px;">epic link</div>
<div class="t" style="left:423px;top:450px;color:#000;letter-spacing:0.35px;">Lowest</div>
<div class="t" style="left:488px;top:450px;color:#000;letter-spacing:0.35px;">Unassigned</div>
<div class="t" style="left:637px;top:450px;color:#42526e;transform:scaleX(0.917);transform-origin:0 0;">BACKLOG</div>
<div class="t" style="left:712px;top:450px;color:#000;letter-spacing:-0.1px;">SLA Goal - 1</div>
<div class="t" style="left:814px;top:450px;color:#000;letter-spacing:0.03px;">In Progress, Exceeded</div>
<div class="t" style="left:973px;top:450px;color:#000;letter-spacing:0.35px;">6 h 20 m</div>
<div class="t" style="left:1106px;top:450px;color:#fff;letter-spacing:0.35px;">-2130 h 21 m</div>
<div class="t" style="left:1239px;top:450px;color:#000;letter-spacing:0.35px;">2136 h 42 m</div>
<div class="t" style="left:1372px;top:450px;color:#000;width:130px;overflow:hidden;letter-spacing:0.45px;">16/Nov/21 11:21 PM</div>
<div class="t" style="left:0px;top:471px;width:27px;text-align:center;color:#1e1e1e">21</div>
<div class="t" style="left:30px;top:471px;color:#000;letter-spacing:0.05px;">Story</div>
<div class="t" style="left:179px;top:471px;color:#0a5cf0;letter-spacing:0.2px;">ADI-162</div>
<div class="t" style="left:274px;top:471px;color:#000;letter-spacing:0.35px;">dgfhgfh</div>
<div class="t" style="left:423px;top:471px;color:#000;letter-spacing:0.35px;">Lowest</div>
<div class="t" style="left:488px;top:471px;color:#000;letter-spacing:0.2px;">Andrii Zakopets</div>
<div class="b" style="left:640px;top:475px;width:1px;height:14px;background:#3b36c4;box-shadow:1px 0 0 rgba(40,140,240,0.55)"></div>
<div class="b" style="left:647px;top:475px;width:1px;height:14px;background:#3b36c4;box-shadow:1px 0 0 rgba(40,140,240,0.55)"></div>
<div class="t" style="left:654px;top:471px;color:#0a45d0;transform:scaleX(0.91);transform-origin:0 0;">SDCD</div>
<div class="t" style="left:712px;top:471px;color:#000;letter-spacing:-0.1px;">SLA Goal - 1</div>
<div class="t" style="left:814px;top:471px;color:#000;letter-spacing:0.03px;">In Progress, Exceeded</div>
<div class="t" style="left:973px;top:471px;color:#000;letter-spacing:0.35px;">6 h 20 m</div>
<div class="t" style="left:1106px;top:471px;color:#fff;letter-spacing:0.35px;">-2130 h 24 m</div>
<div class="t" style="left:1239px;top:471px;color:#000;letter-spacing:0.35px;">2136 h 45 m</div>
<div class="t" style="left:1372px;top:471px;color:#000;width:130px;overflow:hidden;letter-spacing:0.45px;">16/Nov/21 11:19 PM</div>
<div class="t" style="left:0px;top:492px;width:27px;text-align:center;color:#1e1e1e">22</div>
<div class="t" style="left:30px;top:492px;color:#000;letter-spacing:0.05px;">Story</div>
<div class="t" style="left:179px;top:492px;color:#0a5cf0;letter-spacing:0.2px;">ADI-161</div>
<div class="t" style="left:274px;top:492px;color:#000;letter-spacing:0.35px;">test</div>
<div class="t" style="left:423px;top:492px;color:#000;letter-spacing:0.35px;">Lowest</div>
<div class="t" style="left:488px;top:492px;color:#000;letter-spacing:0.35px;">Unassigned</div>
<div class="t" style="left:637px;top:492px;color:#42526e;transform:scaleX(0.917);transform-origin:0 0;">BACKLOG</div>
<div class="t" style="left:712px;top:492px;color:#000;letter-spacing:-0.1px;">SLA Goal - 1</div>
<div class="t" style="left:814px;top:492px;color:#000;letter-spacing:0.03px;">In Progress, Exceeded</div>
<div class="t" style="left:973px;top:492px;color:#000;letter-spacing:0.35px;">6 h 20 m</div>
<div class="t" style="left:1106px;top:492px;color:#fff;letter-spacing:0.35px;">-2130 h 29 m</div>
<div class="t" style="left:1239px;top:492px;color:#000;letter-spacing:0.35px;">2136 h 50 m</div>
<div class="t" style="left:1372px;top:492px;color:#000;width:130px;overflow:hidden;letter-spacing:0.45px;">16/Nov/21 11:14 PM</div>
<div class="t" style="left:0px;top:513px;width:27px;text-align:center;color:#1e1e1e">23</div>
<div class="t" style="left:30px;top:513px;color:#000;letter-spacing:0.05px;">Story</div>
<div class="t" style="left:179px;top:513px;color:#0a5cf0;letter-spacing:0.2px;">ADI-160</div>
<div class="t" style="left:274px;top:513px;color:#000;letter-spacing:0.35px;">test</div>
<div class="t" style="left:423px;top:513px;color:#000;letter-spacing:0.35px;">Lowest</div>
<div class="t" style="left:488px;top:513px;color:#000;letter-spacing:0.35px;">Unassigned</div>
<div class="t" style="left:637px;top:513px;color:#42526e;transform:scaleX(0.917);transform-origin:0 0;">BACKLOG</div>
<div class="t" style="left:712px;top:513px;color:#000;letter-spacing:-0.1px;">SLA Goal - 1</div>
<div class="t" style="left:814px;top:513px;color:#000;letter-spacing:0.03px;">In Progress, Exceeded</div>
<div class="t" style="left:973px;top:513px;color:#000;letter-spacing:0.35px;">6 h 20 m</div>
<div class="t" style="left:1106px;top:513px;color:#fff;letter-spacing:0.35px;">-2130 h 29 m</div>
<div class="t" style="left:1239px;top:513px;color:#000;letter-spacing:0.35px;">2136 h 50 m</div>
<div class="t" style="left:1372px;top:513px;color:#000;width:130px;overflow:hidden;letter-spacing:0.45px;">16/Nov/21 11:13 PM</div>
<div class="t" style="left:0px;top:534px;width:27px;text-align:center;color:#1e1e1e">24</div>
<div class="t" style="left:30px;top:534px;color:#000;letter-spacing:0.05px;">Story</div>
<div class="t" style="left:179px;top:534px;color:#0a5cf0;letter-spacing:0.2px;">ADI-159</div>
<div class="t" style="left:274px;top:534px;color:#000;letter-spacing:0.35px;">negotiated</div>
<div class="t" style="left:423px;top:534px;color:#000;letter-spacing:0.35px;">Lowest</div>
<div class="t" style="left:488px;top:534px;color:#000;letter-spacing:0.2px;">Andrii Zakopets</div>
<div class="b" style="left:640px;top:538px;width:1px;height:14px;background:#3b36c4;box-shadow:1px 0 0 rgba(40,140,240,0.55)"></div>
<div class="b" style="left:647px;top:538px;width:1px;height:14px;background:#3b36c4;box-shadow:1px 0 0 rgba(40,140,240,0.55)"></div>
<div class="t" style="left:654px;top:534px;color:#0a45d0;transform:scaleX(0.91);transform-origin:0 0;">SDCD</div>
<div class="t" style="left:712px;top:534px;color:#000;letter-spacing:-0.1px;">SLA Goal - 1</div>
<div class="t" style="left:814px;top:534px;color:#000;letter-spacing:0.03px;">In Progress, Exceeded</div>
<div class="t" style="left:973px;top:534px;color:#000;letter-spacing:0.35px;">6 h 20 m</div>
<div class="t" style="left:1106px;top:534px;color:#fff;letter-spacing:0.35px;">-2205 h 38 m</div>
<div class="t" style="left:1239px;top:534px;color:#000;letter-spacing:0.35px;">2211 h 59 m</div>
<div class="t" style="left:1372px;top:534px;color:#000;width:130px;overflow:hidden;letter-spacing:0.45px;">11/Nov/21 8:04 PM</div>
<div class="t" style="left:0px;top:72px;width:27px;text-align:center;color:#1e1e1e">1</div>
<div class="b" style="left:708px;top:111px;width:659px;height:19px;border:2px solid #217346;"></div>
<div class="b" style="left:710px;top:113px;width:657px;height:18px;border:1px solid #fff;border-bottom:1px solid #fff;"></div>
<div class="b" style="left:1365px;top:130px;width:8px;height:2px;background:#fff;"></div>
<div class="b" style="left:1367px;top:131px;width:5px;height:4px;background:#217346;"></div>
<svg class="b" style="left:0;top:0" width="1508" height="555"><line x1="687.5" y1="135.5" x2="1402.5" y2="134.5" stroke="#417c7c" stroke-width="7" stroke-linecap="round"/><line x1="588.5" y1="209.3" x2="678" y2="154.5" stroke="#417c7c" stroke-width="7" stroke-linecap="round"/><polygon points="672,147 706.6,135.9 682.4,163.5" fill="#417c7c"/></svg>
</body></html>
